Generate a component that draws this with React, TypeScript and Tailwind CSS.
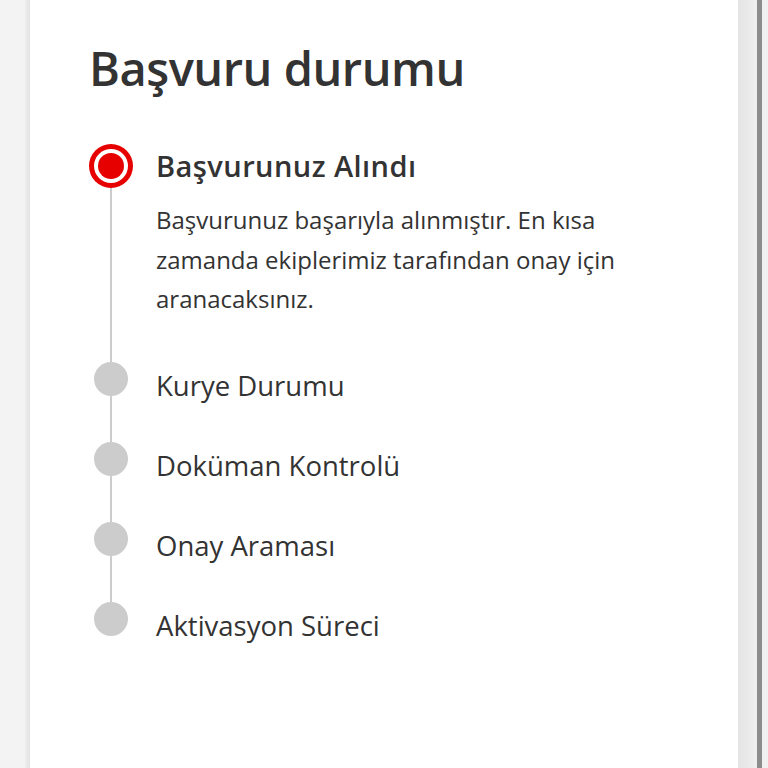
import React from 'react'

const steps = ['Kurye Durumu', 'Doküman Kontrolü', 'Onay Araması', 'Aktivasyon Süreci']

export default function App() {
  return (
    <div className="flex min-h-[768px] w-full bg-[#f3f3f3] font-['Open_Sans',sans-serif] text-[#333]">
      <div className="w-[25px] shrink-0" />
      <div className="w-[5px] shrink-0 bg-gradient-to-r from-[#efefef] to-[#e2e2e2]" />

      {/* Card */}
      <div className="w-[708px] shrink-0 bg-white pl-[59px] pt-[40px]">
        <h1 className="text-[47px] leading-[56px] font-semibold tracking-[-0.01em] text-[#333]">
          Başvuru durumu
        </h1>

        <div className="mt-[48px]">
          {/* Active step */}
          <div className="flex">
            <div className="flex w-[44px] shrink-0 flex-col items-center">
              <div className="flex h-[44px] w-[44px] items-center justify-center rounded-full bg-[#e60000]">
                <div className="flex h-[34px] w-[34px] items-center justify-center rounded-full bg-white">
                  <div className="h-[26px] w-[26px] rounded-full bg-[#e60000]" />
                </div>
              </div>
              <div className="w-[2px] flex-1 bg-[#cccccc]" />
            </div>
            <div className="pl-[23px] pb-[43px]">
              <p className="text-[29px] leading-[44px] font-semibold tracking-[0.015em] text-[#333]">Başvurunuz Alındı</p>
              <p className="mt-[12px] w-[478px] text-[24px] leading-[39.5px] text-[#333]">
                Başvurunuz başarıyla alınmıştır. En kısa zamanda ekiplerimiz tarafından onay için aranacaksınız.
              </p>
            </div>
          </div>

          {steps.map((label, i) => {
            const last = i === steps.length - 1
            return (
              <div key={label} className={last ? 'flex' : 'flex h-[80px]'}>
                <div className="flex w-[44px] shrink-0 flex-col items-center">
                  <div className="h-[34px] w-[34px] shrink-0 rounded-full bg-[#cccccc]" />
                  {!last && <div className="w-[2px] flex-1 bg-[#cccccc]" />}
                </div>
                <p className="mt-[7px] pl-[23px] text-[27.5px] leading-[34px] text-[#333]">{label}</p>
              </div>
            )
          })}
        </div>
      </div>

      {/* Right edge / scrollbar */}
      <div className="w-[19px] shrink-0 bg-gradient-to-r from-[#e4e4e4] to-[#efefef]" />
      <div className="w-[5px] shrink-0 bg-[#8c8c8c]" />
      <div className="flex-1 bg-[#f1f1f1]" />
    </div>
  )
}
